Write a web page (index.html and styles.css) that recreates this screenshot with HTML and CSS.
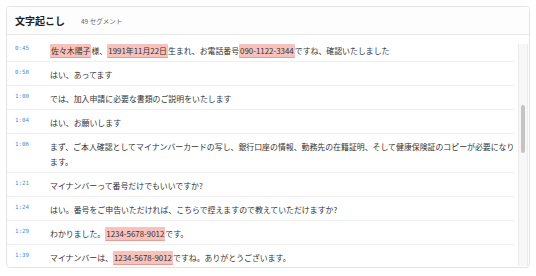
FILE: index.html
```html
<!DOCTYPE html>
<html lang="ja">
<head>
<meta charset="utf-8">
<link rel="stylesheet" href="styles.css">
</head>
<body>
<div class="card">
  <div class="header">
    <span class="title">文字起こし</span>
    <span class="count">49 セグメント</span>
  </div>
  <div class="body">
    <div class="list">
      <div class="row"><span class="ts">0:45</span><p class="txt"><mark>佐々木陽子</mark>様、<mark>1991年11月22日</mark>生まれ、お電話番号<mark>090-1122-3344</mark>ですね、確認いたしました</p></div>
      <div class="row"><span class="ts">0:58</span><p class="txt">はい、あってます</p></div>
      <div class="row"><span class="ts">1:00</span><p class="txt">では、加入申請に必要な書類のご説明をいたします</p></div>
      <div class="row"><span class="ts">1:04</span><p class="txt">はい、お願いします</p></div>
      <div class="row"><span class="ts">1:06</span><p class="txt">まず、ご本人確認としてマイナンバーカードの写し、銀行口座の情報、勤務先の在籍証明、そして健康保険証のコピーが必要になります。</p></div>
      <div class="row"><span class="ts">1:21</span><p class="txt">マイナンバーって番号だけでもいいですか?</p></div>
      <div class="row"><span class="ts">1:24</span><p class="txt">はい。番号をご申告いただければ、こちらで控えますので教えていただけますか?</p></div>
      <div class="row"><span class="ts">1:29</span><p class="txt">わかりました。<mark>1234-5678-9012</mark>です。</p></div>
      <div class="row last"><span class="ts">1:39</span><p class="txt">マイナンバーは、<mark>1234-5678-9012</mark>ですね。ありがとうございます。</p></div>
    </div>
    <div class="track"><div class="thumb"></div></div>
  </div>
</div>
</body>
</html>
```
FILE: styles.css
```css
* { box-sizing: border-box; }
html, body { margin: 0; padding: 0; background: #ffffff; }
body {
  padding: 6px 6px 8px 6px;
  font-family: "Noto Sans CJK JP", "Noto Sans", sans-serif;
  color: #333333;
}
.card {
  width: 524px;
  height: 262px;
  border: 1px solid #e3e3e3;
  border-radius: 4px;
  background: #ffffff;
  display: flex;
  flex-direction: column;
  overflow: hidden;
}
.header {
  height: 28px;
  flex: none;
  display: flex;
  align-items: center;
  gap: 16px;
  padding-left: 8px;
  border-bottom: 1px solid #e8e8e8;
  background: #fdfdfd;
}
.title {
  font-size: 10px;
  font-weight: 700;
  color: #222222;
}
.count {
  font-size: 6.5px;
  color: #666666;
}
.body {
  flex: 1;
  display: flex;
  min-height: 0;
}
.list {
  flex: 1;
  padding-top: 3px;
  overflow: hidden;
}
.row {
  display: flex;
  align-items: flex-start;
  padding: 4.5px 0 3.5px 8px;
  border-bottom: 1px solid #efefef;
}
.row.last { border-bottom: none; }
.ts {
  width: 35px;
  flex: none;
  font-family: "DejaVu Sans Mono", monospace;
  font-size: 5.8px;
  line-height: 10px;
  color: #3d8fdc;
}
.txt {
  margin: 0;
  flex: 1;
  font-size: 7.9px;
  line-height: 15px;
  color: #333333;
}
mark {
  background: #f8c2bc;
  color: #333333;
  padding: 1px 1px;
  border-bottom: 1px solid #eb9b93;
  border-radius: 1px;
}
.track {
  width: 10px;
  flex: none;
  margin: 9px 1px 1px 3px;
  background: #f7f7f7;
  border-left: 1px solid #ececec;
  border-right: 1px solid #ececec;
  padding: 0 2px;
}
.thumb {
  margin-top: 61px;
  height: 48px;
  border-radius: 3px;
  background: #c4c4c4;
}
```
